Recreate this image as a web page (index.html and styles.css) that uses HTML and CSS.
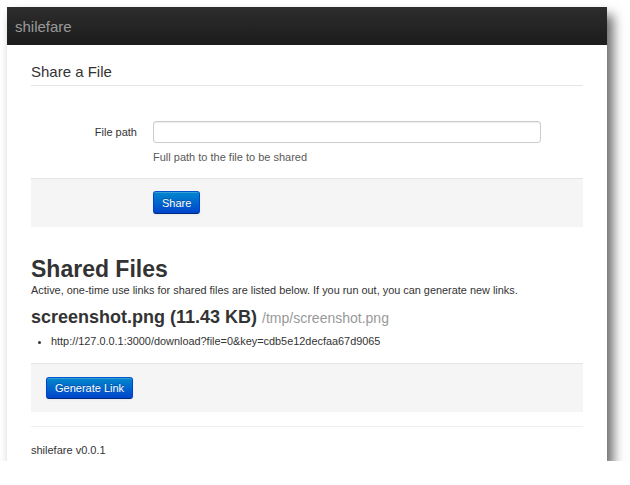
FILE: index.html
```html
<!DOCTYPE html>
<html>
<head>
<meta charset="utf-8">
<title>shilefare</title>
<link rel="stylesheet" href="styles.css">
</head>
<body>
<div class="window">
  <div class="navbar"><span class="brand">shilefare</span></div>
  <div class="container">
    <form class="share-form">
      <div class="legend">Share a File</div>
      <div class="control-row">
        <label class="control-label" for="path">File path</label>
        <input class="text-input" id="path" type="text">
      </div>
      <div class="help">Full path to the file to be shared</div>
      <div class="form-actions">
        <button class="btn" type="button">Share</button>
      </div>
    </form>
    <h1 class="title">Shared Files</h1>
    <p class="desc">Active, one-time use links for shared files are listed below. If you run out, you can generate new links.</p>
    <h3 class="file-name">screenshot.png (11.43 KB) <span class="file-path">/tmp/screenshot.png</span></h3>
    <ul class="links">
      <li>http://127.0.0.1:3000/download?file=0&amp;key=cdb5e12decfaa67d9065</li>
    </ul>
    <div class="link-actions">
      <button class="btn" type="button">Generate Link</button>
    </div>
    <hr class="rule">
    <div class="footer">shilefare v0.0.1</div>
  </div>
</div>
</body>
</html>
```
FILE: styles.css
```css
html, body {
  margin: 0;
  padding: 0;
  background: #ffffff;
}
body {
  font-family: "Liberation Sans", Arial, sans-serif;
  font-size: 11px;
  color: #333333;
  padding: 7px 0 0 7px;
}
.window {
  width: 600px;
  height: 454px;
  background: #ffffff;
  box-shadow: 6px 8px 11px rgba(0, 0, 0, 0.6);
  overflow: hidden;
}
.navbar {
  height: 38px;
  background: linear-gradient(#2d2d2d, #1c1c1c);
  display: flex;
  align-items: center;
  padding-left: 8px;
}
.brand {
  font-size: 15px;
  color: #9a9a9a;
}
.container {
  margin: 0 24px;
}
.share-form {
  margin: 0;
}
.legend {
  margin-top: 18px;
  font-size: 15px;
  line-height: 18px;
  padding-bottom: 4px;
  border-bottom: 1px solid #e5e5e5;
  color: #333333;
}
.control-row {
  display: flex;
  align-items: center;
  gap: 16px;
  margin-top: 35px;
}
.control-label {
  width: 106px;
  text-align: right;
  line-height: 22px;
}
.text-input {
  box-sizing: border-box;
  width: 388px;
  height: 22px;
  border: 1px solid #cccccc;
  border-radius: 3px;
  box-shadow: inset 0 1px 1px rgba(0, 0, 0, 0.075);
  background: #ffffff;
  margin: 0;
  padding: 2px 5px;
}
.help {
  margin: 7px 0 0 122px;
  line-height: 14px;
  color: #595959;
}
.form-actions {
  margin-top: 14px;
  border-top: 1px solid #e5e5e5;
  background: #f5f5f5;
  padding: 12px 0 13px 122px;
}
.btn {
  font-family: "Liberation Sans", Arial, sans-serif;
  font-size: 11px;
  height: 23px;
  padding: 0 8px;
  color: #ffffff;
  background: linear-gradient(#0088cc, #0044cc);
  border: 1px solid #0044aa;
  border-color: #0055cc #0044cc #002a80;
  border-radius: 3px;
  text-shadow: 0 -1px 0 rgba(0, 0, 0, 0.25);
  box-shadow: inset 0 1px 0 rgba(255, 255, 255, 0.2), 0 1px 2px rgba(0, 0, 0, 0.05);
  cursor: pointer;
}
.title {
  margin: 29px 0 0;
  font-size: 23px;
  line-height: 26px;
  font-weight: bold;
  color: #333333;
}
.desc {
  margin: 0;
  line-height: 16px;
  font-size: 10.9px;
}
.file-name {
  margin: 9px 0 0;
  font-size: 18px;
  line-height: 20px;
  font-weight: bold;
  color: #333333;
}
.file-path {
  font-size: 14px;
  font-weight: normal;
  color: #999999;
}
.links {
  margin: 5px 0 0;
  padding-left: 20px;
  line-height: 16px;
  font-size: 10.9px;
}
.link-actions {
  margin-top: 14px;
  border-top: 1px solid #e5e5e5;
  background: #f5f5f5;
  padding: 13px 15px;
}
.link-actions .btn {
  height: 22px;
}
.rule {
  margin: 14px 0 0;
  border: 0;
  border-top: 1px solid #eeeeee;
  height: 0;
}
.footer {
  margin-top: 15px;
  line-height: 16px;
}
```
